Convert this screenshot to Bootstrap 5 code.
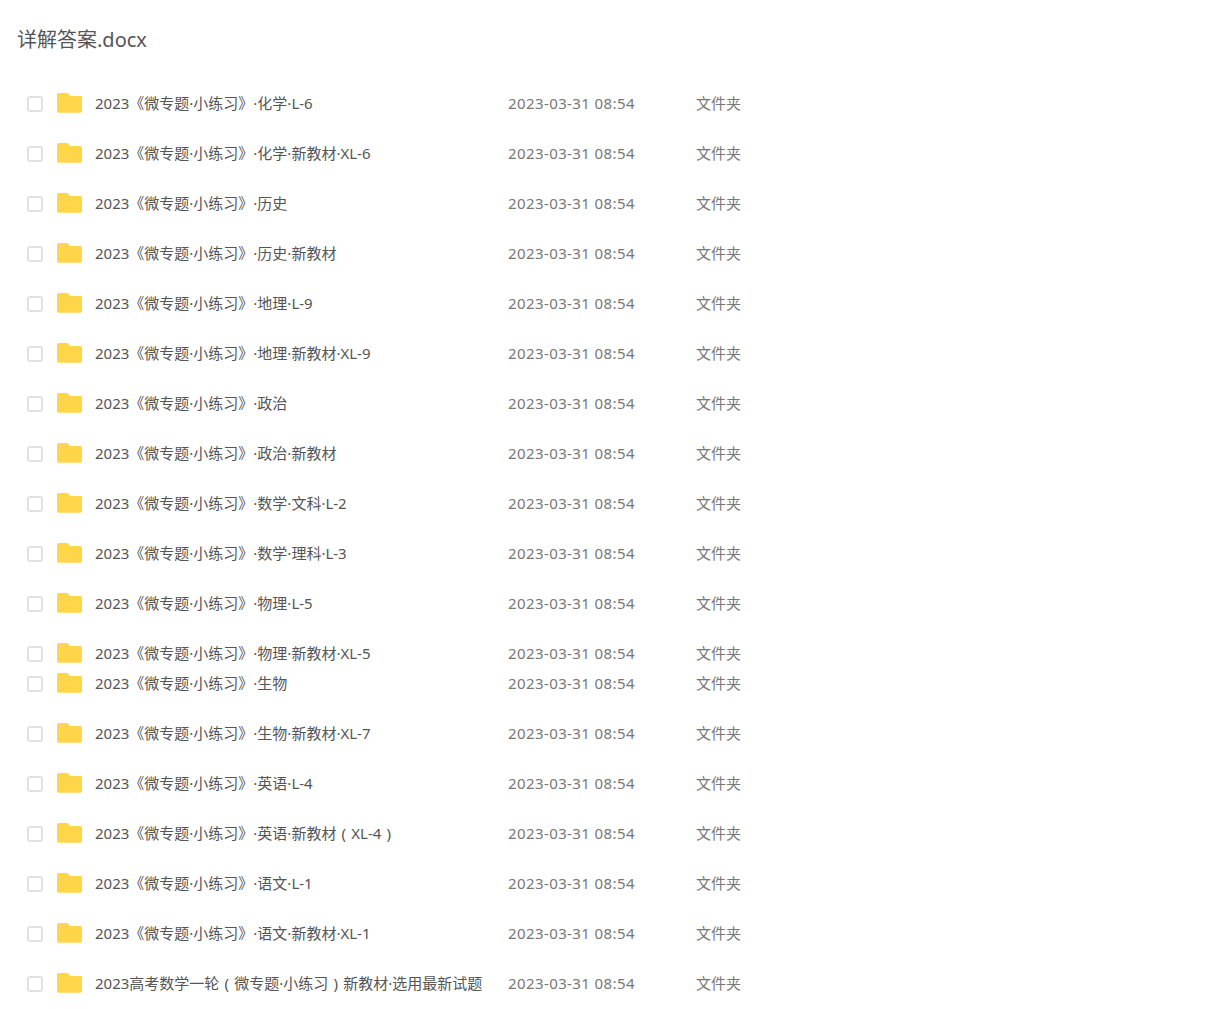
<!DOCTYPE html>
<html lang="zh">
<head>
<meta charset="utf-8">
<title>详解答案</title>
<link href="https://cdn.jsdelivr.net/npm/bootstrap@5.3.0/dist/css/bootstrap.min.css" rel="stylesheet">
<style>
body{background:#fff;font-family:"Noto Sans","Noto Sans CJK SC",sans-serif;color:#666;padding:27px 0 0 17px;overflow:hidden;text-spacing-trim:space-all}
.doc-title{font-size:20px;line-height:26px;color:#555;font-weight:400;margin:0 0 41px}
.file-row{height:20px;margin-top:30px;font-size:15px;line-height:20px}
.file-row.tight{margin-top:10px}
.tick{width:16px;height:16px;margin:2px 14px 0 10px;border:2px solid #e2e2e2;border-radius:3px;background:#fff;flex:none}
.folder{width:25px;height:20px;flex:none;margin-right:13px;margin-top:-1px}
.fname{width:413px;flex:none;color:#555;white-space:nowrap;margin-top:-1px}
.fdate{width:188px;flex:none;color:#777;white-space:nowrap;letter-spacing:.4px;margin-top:-1px}
.ftype{color:#777;white-space:nowrap;margin-top:-1px}
.pa{padding:0 5.2px}
</style>
</head>
<body>
<h1 class="doc-title">详解答案.docx</h1>
<div id="list"></div>
<script>
var names=["2023《微专题·小练习》·化学·L-6","2023《微专题·小练习》·化学·新教材·XL-6","2023《微专题·小练习》·历史","2023《微专题·小练习》·历史·新教材","2023《微专题·小练习》·地理·L-9","2023《微专题·小练习》·地理·新教材·XL-9","2023《微专题·小练习》·政治","2023《微专题·小练习》·政治·新教材","2023《微专题·小练习》·数学·文科·L-2","2023《微专题·小练习》·数学·理科·L-3","2023《微专题·小练习》·物理·L-5","2023《微专题·小练习》·物理·新教材·XL-5","2023《微专题·小练习》·生物","2023《微专题·小练习》·生物·新教材·XL-7","2023《微专题·小练习》·英语·L-4","2023《微专题·小练习》·英语·新教材<span class=\"pa\">(</span>XL-4<span class=\"pa\">)</span>","2023《微专题·小练习》·语文·L-1","2023《微专题·小练习》·语文·新教材·XL-1","2023高考数学一轮<span class=\"pa\">(</span>微专题·小练习<span class=\"pa\">)</span>新教材·选用最新试题"];
document.getElementById('list').innerHTML=names.map(function(n,i){
return '<div class="file-row d-flex'+(i===12?' tight':'')+'"><span class="tick"></span>'+
'<svg class="folder" viewBox="0 0 25 20"><path d="M2 0h7.5c1 0 1.6.4 2.2 1.2L13 3h10.500c.9 0 1.500.6 1.500 1.500V18c0 1-.7 1.700-1.700 1.700H1.700C.7 19.700 0 19 0 18V2C0 .8.800 0 2 0z" fill="#ffd54a"/></svg>'+
'<span class="fname">'+n+'</span><span class="fdate">2023-03-31 08:54</span><span class="ftype">文件夹</span></div>';
}).join('');
</script>
<script src="https://cdn.jsdelivr.net/npm/bootstrap@5.3.0/dist/js/bootstrap.bundle.min.js"></script>
</body>
</html>
